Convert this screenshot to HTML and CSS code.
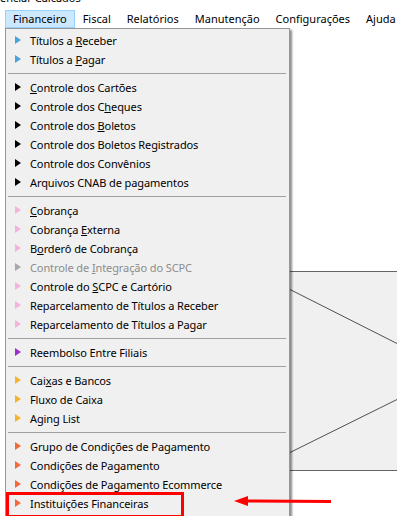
FILE: index.html
```html
<!DOCTYPE html>
<html lang="pt-BR">
<head>
  <meta charset="UTF-8">
  <title>Financeiro</title>
  <link rel="stylesheet" href="styles.css">
</head>
<body>
<div class="caption"><span>enciar Calcados</span></div>

<nav class="menubar">
  <span class="top active">Financeiro</span>
  <span class="top">Fiscal</span>
  <span class="top">Relatórios</span>
  <span class="top">Manutenção</span>
  <span class="top">Configurações</span>
  <span class="top">Ajuda</span>
</nav>

<div class="workspace">
  <div class="panel">
    <svg width="197" height="198" viewBox="0 0 197 198">
      <line x1="90" y1="17.5" x2="197" y2="71.5" stroke="#505050" stroke-width="1"/>
      <line x1="90" y1="180.5" x2="197" y2="127.5" stroke="#505050" stroke-width="1"/>
    </svg>
  </div>

  <ul class="dropdown">
    <li class="item blue"><i></i>Títulos a <u>R</u>eceber</li>
    <li class="item blue"><i></i>Títulos a <u>P</u>agar</li>
    <li class="sep"></li>
    <li class="item black"><i></i><u>C</u>ontrole dos Cartões</li>
    <li class="item black"><i></i>Controle dos C<u>h</u>eques</li>
    <li class="item black"><i></i>Controle dos <u>B</u>oletos</li>
    <li class="item black"><i></i>Controle dos Boletos Registrados</li>
    <li class="item black"><i></i>Controle dos Convênios</li>
    <li class="item black"><i></i>Arquivos CNAB de pagamentos</li>
    <li class="sep"></li>
    <li class="item pink"><i></i><u>C</u>obrança</li>
    <li class="item pink"><i></i>Cobrança <u>E</u>xterna</li>
    <li class="item pink"><i></i>B<u>o</u>rderô de Cobrança</li>
    <li class="item disabled"><i></i>Controle de <u>I</u>ntegração do SCPC</li>
    <li class="item pink"><i></i>Controle do <u>S</u>CPC e Cartório</li>
    <li class="item pink"><i></i>Reparcelamento de Títulos a Receber</li>
    <li class="item pink"><i></i>Reparcelamento de Títulos a Pagar</li>
    <li class="sep"></li>
    <li class="item purple"><i></i>Reembolso Entre Filiais</li>
    <li class="sep"></li>
    <li class="item yellow"><i></i>Cai<u>x</u>as e Bancos</li>
    <li class="item yellow"><i></i>Fluxo de Caixa</li>
    <li class="item yellow"><i></i>Aging List</li>
    <li class="sep"></li>
    <li class="item orange"><i></i>Grupo de Condições de Pagamento</li>
    <li class="item orange"><i></i>Condições de Pagamento</li>
    <li class="item orange"><i></i>Condições de Pagamento Ecommerce</li>
    <li class="item orange marked"><i></i>Instituições Financeiras</li>
  </ul>

  <svg class="arrow" width="100" height="12" viewBox="0 0 100 12">
    <line x1="10" y1="6" x2="97" y2="6.5" stroke="#f00" stroke-width="3"/>
    <polygon points="0,6 14,1 14,11" fill="#f00"/>
  </svg>
</div>
</body>
</html>
```

FILE: styles.css
```css
*{box-sizing:border-box;}
html,body{margin:0;padding:0;background:#fff;overflow:hidden;}
body{font-family:"Noto Sans",sans-serif;font-size:11px;color:#000;width:397px;height:516px;}
.caption{height:10px;overflow:hidden;white-space:nowrap;}
.caption span{display:block;line-height:12px;margin-top:-8px;}
.menubar{display:flex;height:18px;padding-left:5px;white-space:nowrap;}
.top{padding:0 7px;line-height:16px;border:1px solid transparent;}
.top.active{background:#cce8ff;border-color:#99d1ff;}
.workspace{position:relative;height:488px;}
.panel{position:absolute;left:200px;top:243px;width:197px;height:200px;background:#f0f0f0;border-top:1px solid #646464;border-bottom:1px solid #646464;}
.panel svg{display:block;}
.dropdown{position:absolute;left:5px;top:0;width:285px;height:500px;margin:0;padding:2px 0 0;list-style:none;background:#f0f0f0;border:1px solid #979797;box-shadow:2px 2px 2px rgba(0,0,0,.45);}
.item{height:19px;line-height:19px;padding-left:24px;position:relative;white-space:nowrap;letter-spacing:-.1px;}
.item i{position:absolute;left:9px;top:5px;width:0;height:0;border-top:4.5px solid transparent;border-bottom:4.5px solid transparent;border-left:6px solid #000;}
.blue i{border-left-color:#4aa3d9;}
.black i{border-left-color:#000;}
.pink i{border-left-color:#f2b4dc;}
.disabled{color:#8c8c8c;}
.disabled i{border-left-color:#a8a8a8;}
.purple i{border-left-color:#9a2ed0;}
.yellow i{border-left-color:#f3b52e;}
.orange i{border-left-color:#f26a3c;}
.sep{height:9px;padding:4px 3px 4px 2px;}
.sep::before{content:"";display:block;height:1px;background:#a0a0a0;}
.marked::after{content:"";position:absolute;left:0;top:-2px;width:172px;height:20px;border:3px solid #f00;}
.arrow{position:absolute;left:234px;top:467px;}
```
